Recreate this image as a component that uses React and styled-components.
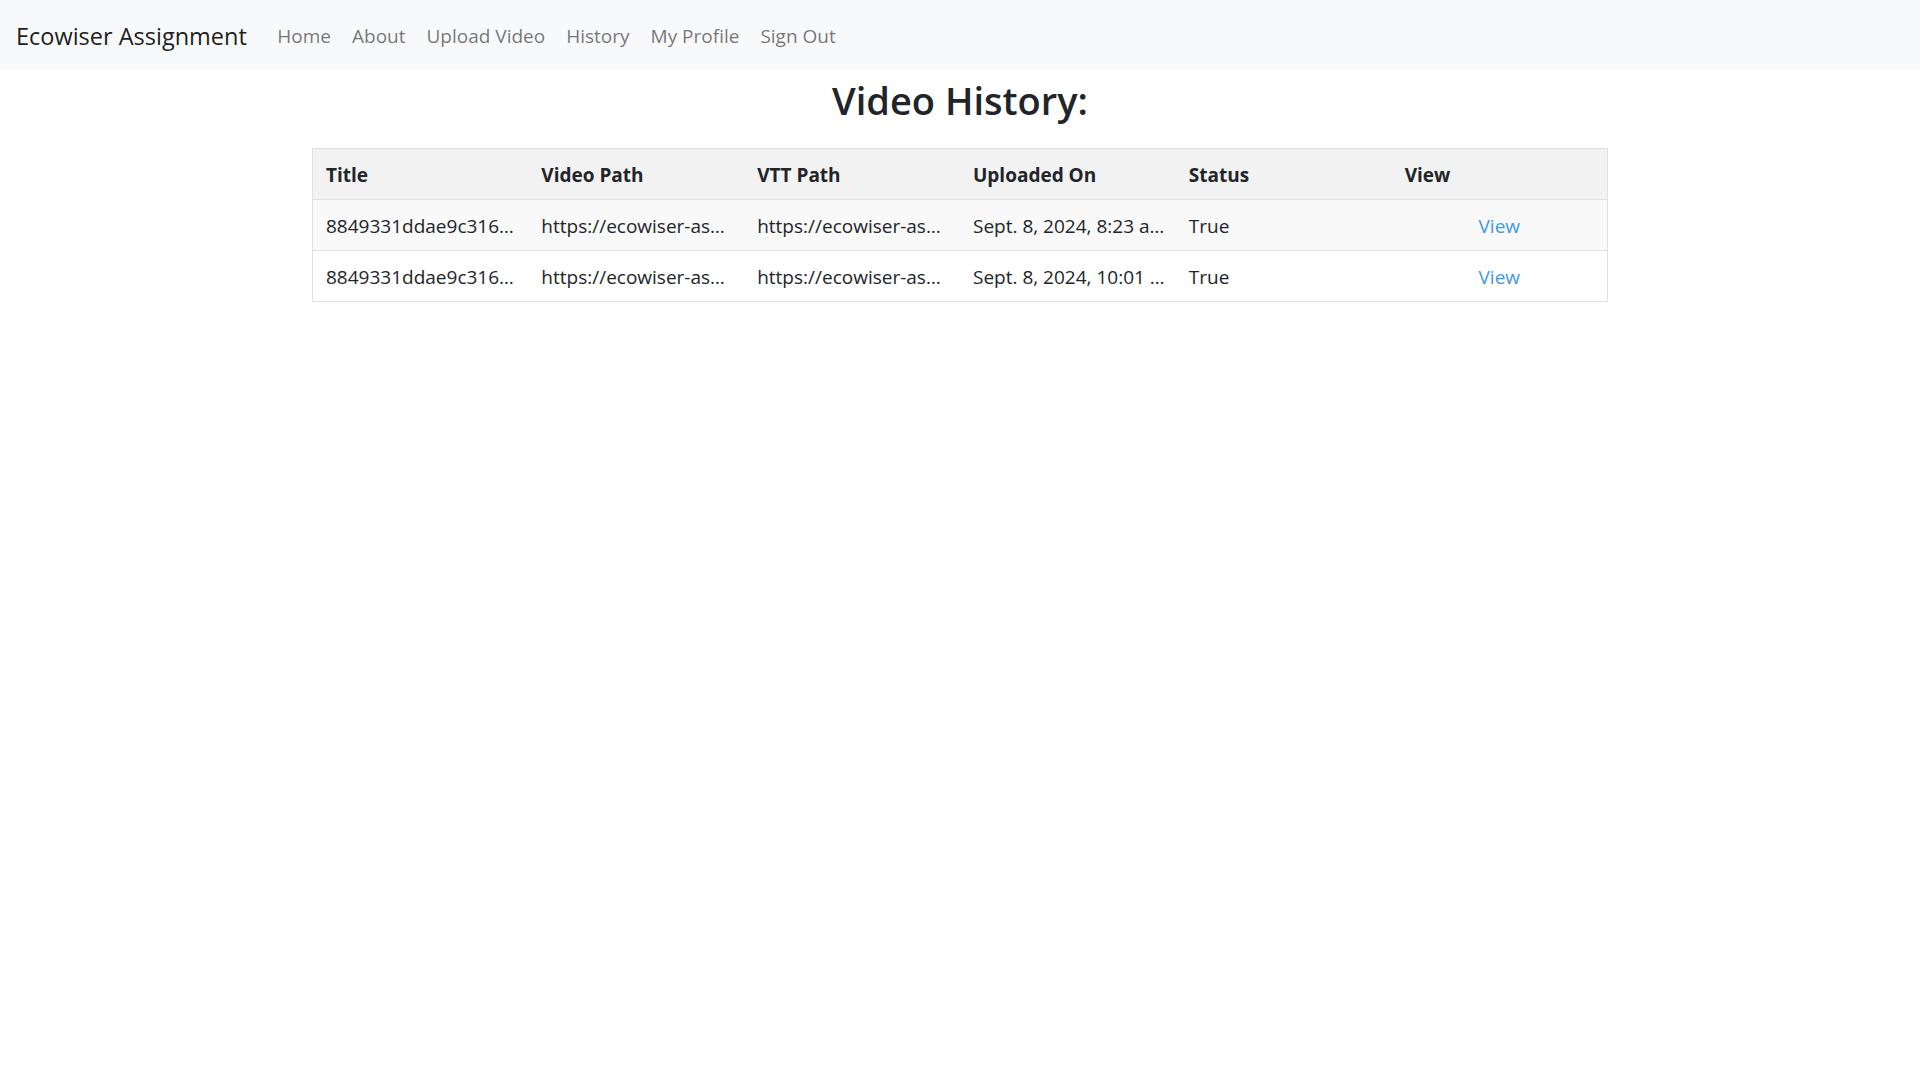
import React from "react";
import styled, { createGlobalStyle } from "styled-components";

const GlobalStyle = createGlobalStyle`
  html, body { margin: 0; padding: 0; background: #ffffff; }
  body {
    font-family: "Open Sans", "Noto Sans", "Liberation Sans", sans-serif;
    color: #212529;
    -webkit-font-smoothing: antialiased;
  }
  * { box-sizing: border-box; }
`;

const NavBar = styled.nav`
  display: flex;
  align-items: center;
  height: 70px;
  padding: 2px 16px 0;
  background: #f8f9fa;
`;

const Brand = styled.a`
  font-size: 23.5px;
  line-height: 30px;
  color: rgba(0, 0, 0, 0.9);
  text-decoration: none;
  margin-right: 20px;
  white-space: nowrap;
`;

const NavList = styled.ul`
  display: flex;
  list-style: none;
  margin: 0;
  padding: 0;
`;

const NavLink = styled.a`
  display: block;
  padding: 10px 10.5px;
  font-size: 19px;
  line-height: 30px;
  color: rgba(0, 0, 0, 0.55);
  text-decoration: none;
  white-space: nowrap;
`;

const Main = styled.main`
  display: flex;
  flex-direction: column;
  align-items: center;
`;

const Heading = styled.h2`
  margin: 6px 0 24px;
  font-size: 38px;
  line-height: 48px;
  font-weight: 600;
  color: #212529;
`;

const Table = styled.table`
  width: 1296px;
  table-layout: fixed;
  border-collapse: collapse;
  border: 1px solid #dee2e6;
  font-size: 19px;
`;

const HeadRow = styled.tr`
  background: #f2f2f2;
`;

const Row = styled.tr`
  background: ${(p) => (p.$striped ? "#f9f9f9" : "#ffffff")};
  border-top: 1px solid #dee2e6;
`;

const Th = styled.th`
  height: 51px;
  padding: 2px 13px 0;
  text-align: left;
  font-weight: 700;
  line-height: 30px;
  color: #212529;
  white-space: nowrap;
`;

const Td = styled.td`
  height: 51px;
  padding: 2px 13px 0;
  text-align: ${(p) => (p.$center ? "center" : "left")};
  line-height: 30px;
  color: #212529;
  white-space: nowrap;
`;

const ViewLink = styled.a`
  color: #3f9ae2;
  text-decoration: none;
`;

const links = ["Home", "About", "Upload Video", "History", "My Profile", "Sign Out"];

const rows = [
  {
    title: "8849331ddae9c316…",
    video: "https://ecowiser-as…",
    vtt: "https://ecowiser-as…",
    uploaded: "Sept. 8, 2024, 8:23 a…",
    status: "True",
  },
  {
    title: "8849331ddae9c316…",
    video: "https://ecowiser-as…",
    vtt: "https://ecowiser-as…",
    uploaded: "Sept. 8, 2024, 10:01 …",
    status: "True",
  },
];

export default function App() {
  return (
    <>
      <GlobalStyle />
      <NavBar>
        <Brand href="#">Ecowiser Assignment</Brand>
        <NavList>
          {links.map((l) => (
            <li key={l}>
              <NavLink href="#">{l}</NavLink>
            </li>
          ))}
        </NavList>
      </NavBar>
      <Main>
        <Heading>Video History:</Heading>
        <Table>
          <thead>
            <HeadRow>
              <Th>Title</Th>
              <Th>Video Path</Th>
              <Th>VTT Path</Th>
              <Th>Uploaded On</Th>
              <Th>Status</Th>
              <Th>View</Th>
            </HeadRow>
          </thead>
          <tbody>
            {rows.map((r, i) => (
              <Row key={i} $striped={i % 2 === 0}>
                <Td>{r.title}</Td>
                <Td>{r.video}</Td>
                <Td>{r.vtt}</Td>
                <Td>{r.uploaded}</Td>
                <Td>{r.status}</Td>
                <Td $center>
                  <ViewLink href="#">View</ViewLink>
                </Td>
              </Row>
            ))}
          </tbody>
        </Table>
      </Main>
    </>
  );
}
